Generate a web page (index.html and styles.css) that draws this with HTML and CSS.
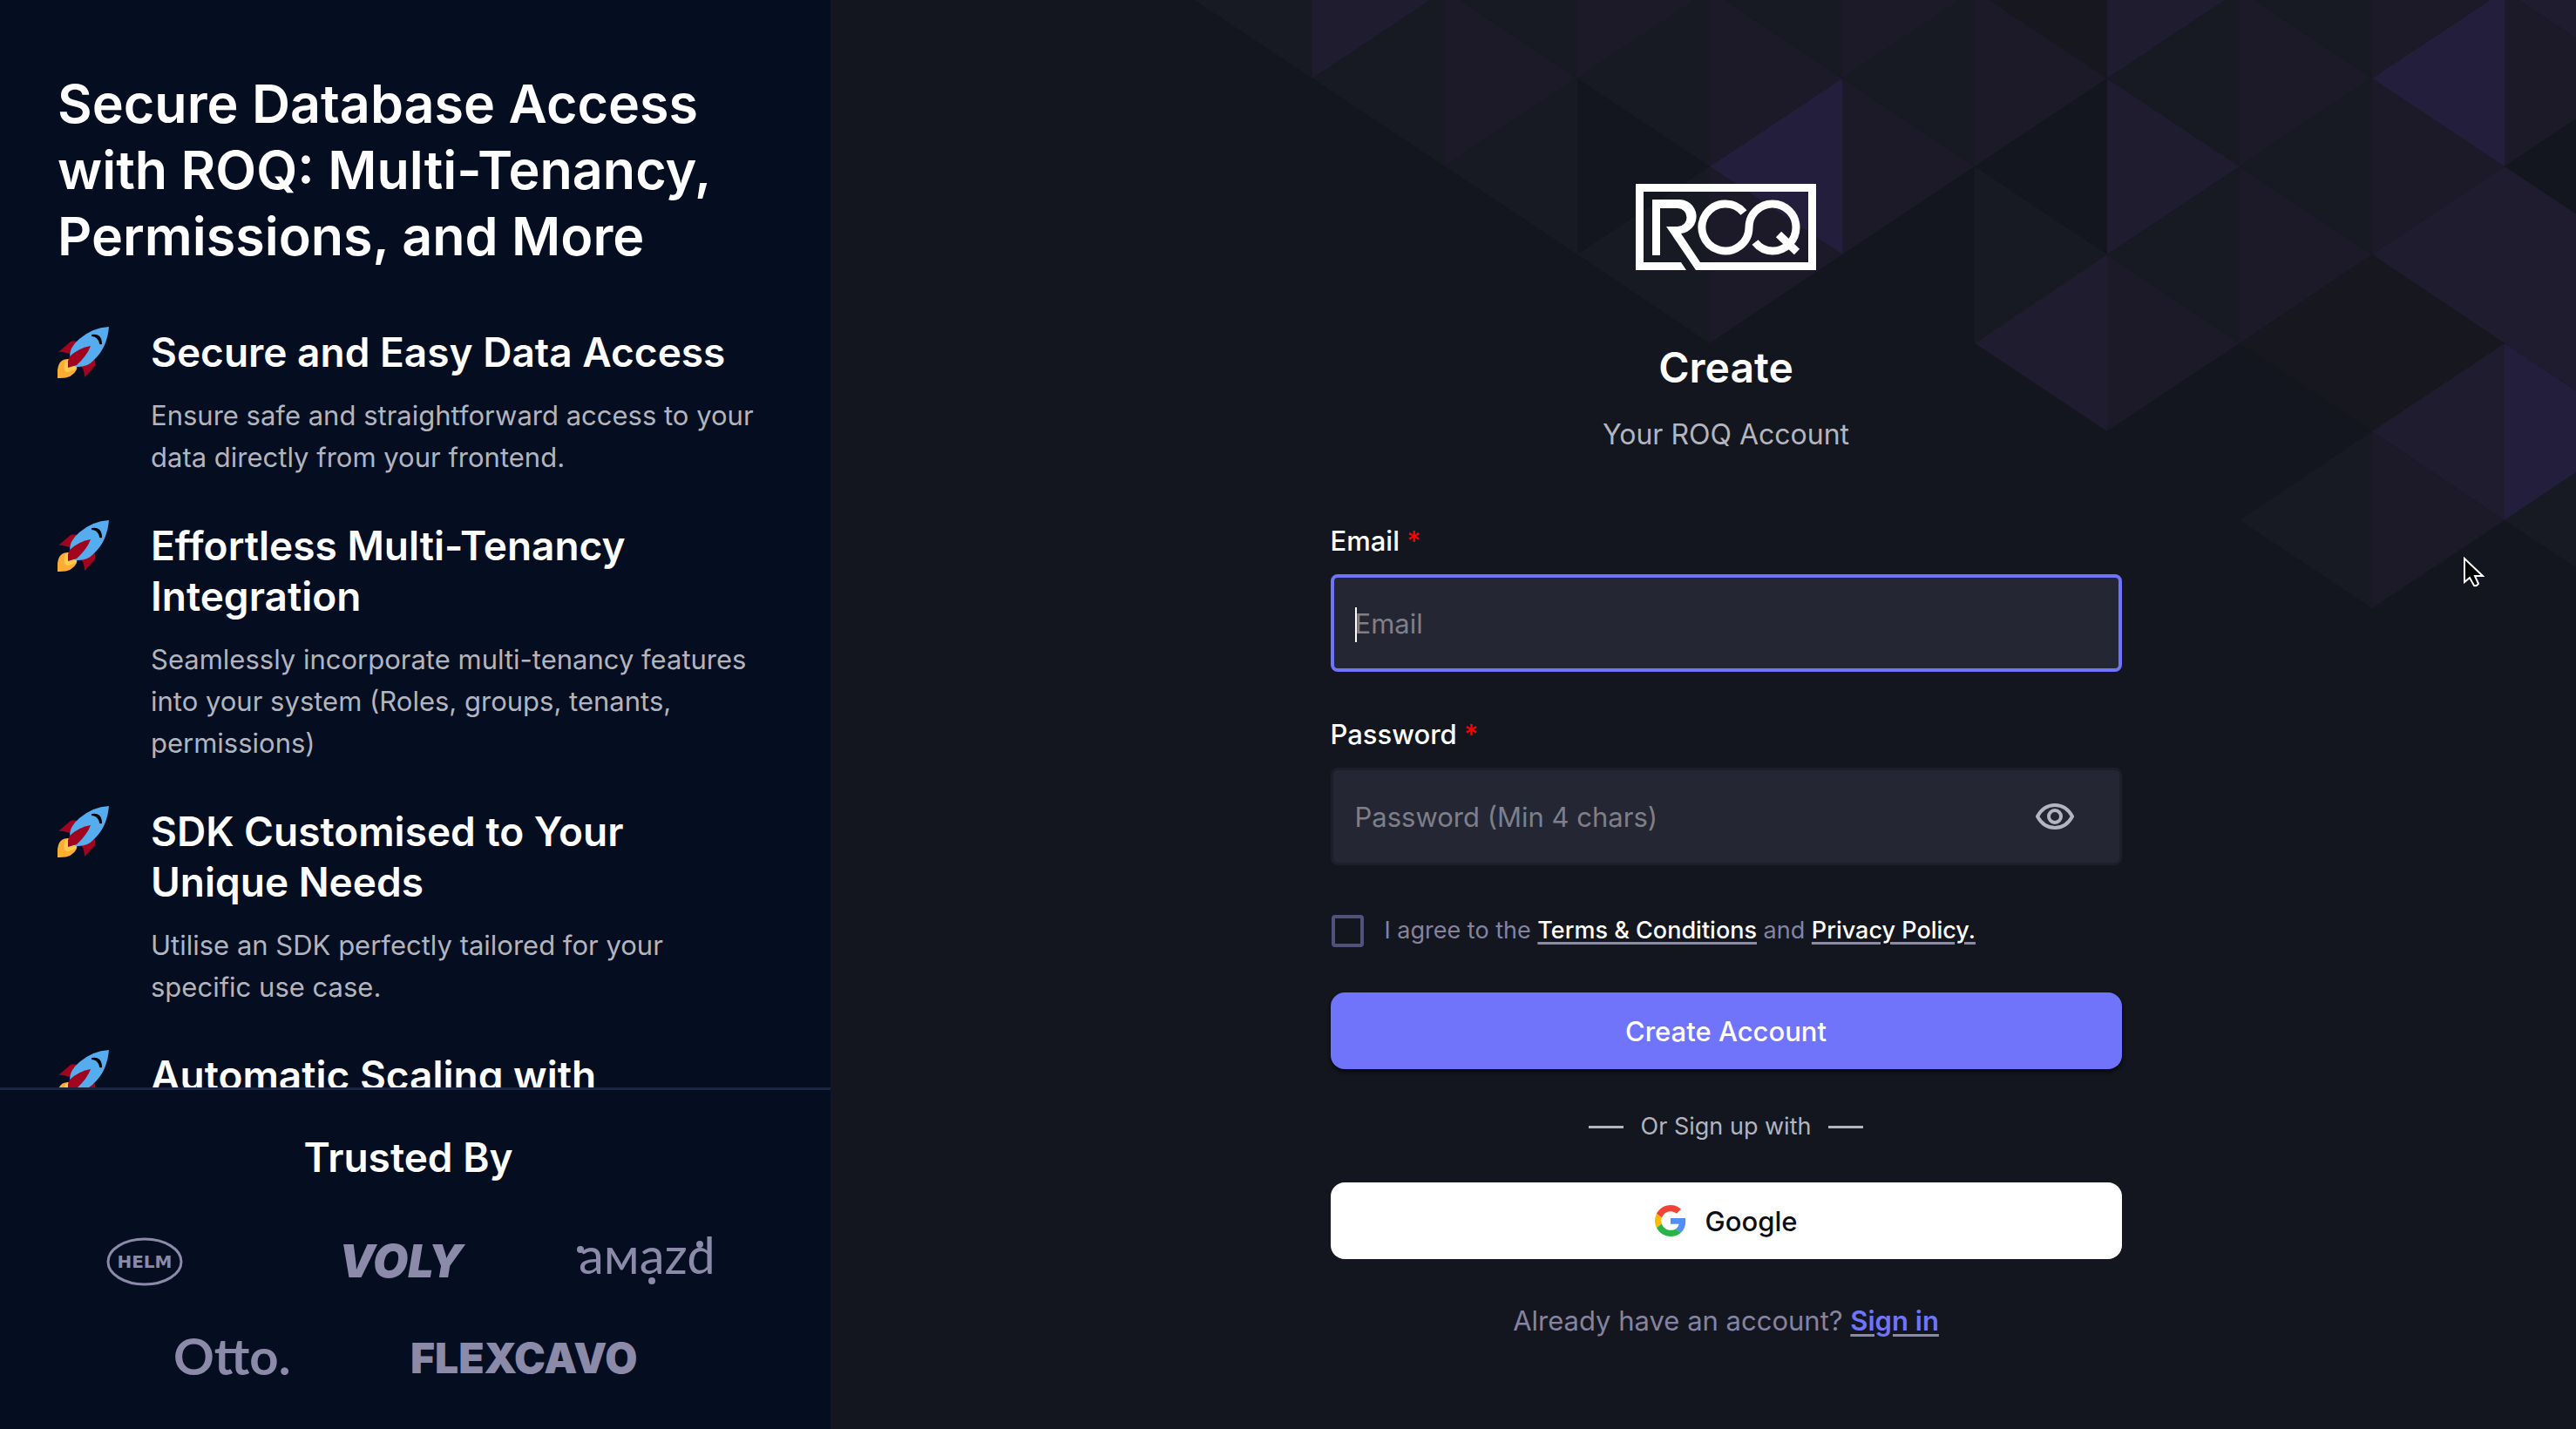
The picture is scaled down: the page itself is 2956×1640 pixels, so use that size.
FILE: index.html
```html
<!DOCTYPE html>
<html lang="en">
<head>
<meta charset="utf-8">
<meta name="viewport" content="width=device-width, initial-scale=1">
<title>Create your ROQ account</title>
<link rel="stylesheet" href="styles.css">
</head>
<body>
<svg class="defs" width="0" height="0" aria-hidden="true">
  <symbol id="rocket" viewBox="0 0 60 60">
    <path d="M1 29 15 17Q20 15 25 18L13 31Q6 28 1 29Z" fill="#a0041e"/>
    <path d="M43 38V45L31 58Q31 50 27 45L30 42Z" fill="#a0041e"/>
    <path d="M0 59Q-2 37 12 37Q24 40 22 49Q17 60 0 59Z" fill="#ffac33"/>
    <path d="M8 42Q6 52 12 52Q21 50 22 46L13 37Q9 38 8 42Z" fill="#ffcc4d"/>
    <path d="M59 0Q40 1 25 14Q13 24 14 36Q13 43 21 46Q34 47 42 38Q57 24 59 0Z" fill="#55acee"/>
    <path d="M12 39 14 34Q25 24 38 22Q34 33 22 44L12 47Z" fill="#a0041e"/>
    <path d="M39 9Q51 7 51 20Q48 21 48 19Q46 11 39 11Z" fill="#000"/>
  </symbol>
</svg>
<div class="page">
  <aside class="promo">
    <div class="promo-scroll">
      <h1 class="promo-title">Secure Database Access with ROQ: Multi-Tenancy, Permissions, and More</h1>
      <ul class="features">
        <li class="feature">
          <svg class="rocket" aria-hidden="true"><use href="#rocket"/></svg>
          <div class="feature-body">
            <h2 class="feature-title">Secure and Easy Data Access</h2>
            <p class="feature-text">Ensure safe and straightforward access to your data directly from your frontend.</p>
          </div>
        </li>
        <li class="feature">
          <svg class="rocket" aria-hidden="true"><use href="#rocket"/></svg>
          <div class="feature-body">
            <h2 class="feature-title">Effortless Multi-Tenancy Integration</h2>
            <p class="feature-text">Seamlessly incorporate multi-tenancy features into your system (Roles, groups, tenants, permissions)</p>
          </div>
        </li>
        <li class="feature">
          <svg class="rocket" aria-hidden="true"><use href="#rocket"/></svg>
          <div class="feature-body">
            <h2 class="feature-title">SDK Customised to Your Unique Needs</h2>
            <p class="feature-text">Utilise an SDK perfectly tailored for your specific use case.</p>
          </div>
        </li>
        <li class="feature">
          <svg class="rocket" aria-hidden="true"><use href="#rocket"/></svg>
          <div class="feature-body">
            <h2 class="feature-title">Automatic Scaling with</h2>
          </div>
        </li>
      </ul>
    </div>
    <section class="trusted">
      <h2 class="trusted-title">Trusted By</h2>
      <div class="brands">
        <svg class="brand" width="90" height="58" viewBox="0 0 90 58"><ellipse cx="45" cy="29" rx="42" ry="26" class="brand-ring"/><text x="45" y="36" class="brand-helm">HELM</text></svg>
        <svg class="brand" width="140" height="58" viewBox="0 0 140 58"><text x="-3" y="47" class="brand-voly">VOLY</text></svg>
        <svg class="brand" width="158" height="58" viewBox="0 0 158 58"><text x="2" y="43" class="brand-amazd">aᴍazd</text><circle cx="4" cy="15" r="4"/><circle cx="86" cy="51" r="4"/><circle cx="141" cy="9" r="4"/></svg>
      </div>
      <div class="brands-second">
        <svg class="brand" width="134" height="46" viewBox="0 0 134 46"><text x="-2" y="41" class="brand-otto">Otto.</text></svg>
        <svg class="brand" width="264" height="46" viewBox="0 0 264 46"><text x="-2" y="39" class="brand-flex">FLEXCAVO</text></svg>
      </div>
    </section>
  </aside>

  <main class="signup">
    <svg class="pattern" width="1602" height="700" viewBox="1354 0 1602 700" aria-hidden="true">
      <g fill="#171923">
        <path d="M1354-11 1506-112V90ZM1506 90 1658-11V191ZM1658-11 1810-112V90ZM1658 191 1810 90V292ZM1810 90 1962-11V191ZM1810 292 1962 191V394ZM1962-11 2114-112V90ZM2114 90 2266-11V191ZM2266 191 2418 292 2266 394ZM2418 90 2570-11V191ZM2418 292 2570 191V394ZM2570-11 2722-112V90ZM2570 191 2722 90V292ZM2570 597 2722 495V698ZM2874 597 3026 495V698Z"/>
      </g>
      <g fill="#16171f"><path d="M2266-11 2418-112V90ZM2722 292 2874 394 2722 495ZM2570 394 2722 292V495Z"/></g>
      <g fill="#1c1a28">
        <path d="M1658-11 1810 90 1658 191ZM1810-112 1962-11 1810 90ZM1962-11 2114 90 1962 191ZM1962 191 2114 292 1962 394ZM2114-112 2266-11 2114 90ZM2114 90 2266 191 2114 292ZM2266-11 2418 90 2266 191ZM2418 292 2570 394 2418 495ZM2570-11 2722 90 2570 191ZM2570 191 2722 292 2570 394ZM2722-112 2874-11 2722 90ZM2722 90 2874 191 2722 292ZM2722 495 2874 597 2722 698ZM2874-11 3026 90 2874 191Z"/>
      </g>
      <g fill="#1f1c30">
        <path d="M1506-112 1658-11 1506 90ZM2266 394 2418 292V495ZM2418-112 2570-11 2418 90ZM2418 90 2570 191 2418 292ZM2722 292 2874 191V394ZM2722 495 2874 394V597ZM2874-11 3026-112V90ZM2874 191 3026 292 2874 394ZM2874 394 3026 292V495Z"/>
      </g>
      <g fill="#231e3b"><path d="M1962 191 2114 90V292ZM2722 90 2874-11V191ZM2874 394 3026 495 2874 597Z"/></g>
    </svg>

    <form class="form" onsubmit="return false">
      <svg class="logo" width="208" height="100" viewBox="0 0 208 100" role="img" aria-label="ROQ">
        <path d="M0 0H207V99H69L35 49H48A10.500 10.500 0 0 0 48 28H28V82H19V18H48A19.500 19.500 0 0 1 52 57L74 90H198V9H9V90H52L58 99H0Z" fill="#fff"/>
        <path d="M124 33A27 27 0 1 0 130 50A27 27 0 1 1 157 77Q145 77 137 67" fill="none" stroke="#fff" stroke-width="9"/>
        <path d="M164 58 185 78" stroke="#fff" stroke-width="9"/>
      </svg>
      <h2 class="form-title">Create</h2>
      <p class="form-sub">Your ROQ Account</p>

      <label class="label" for="email">Email <span class="req">*</span></label>
      <div class="field field-active">
        <input class="input" id="email" type="email" placeholder="Email">
        <span class="caret"></span>
      </div>

      <label class="label" for="password">Password <span class="req">*</span></label>
      <div class="field">
        <input class="input" id="password" type="password" placeholder="Password (Min 4 chars)">
        <button class="eye" type="button" aria-label="Show password">
          <svg width="44" height="30" viewBox="0 0 44 30" fill="none" stroke="#b4b4c2" stroke-width="4"><path d="M2 15Q9 2 22 2T42 15Q35 28 22 28T2 15Z"/><circle cx="22" cy="15" r="7"/></svg>
        </button>
      </div>

      <div class="agree">
        <input class="check" id="agree" type="checkbox">
        <label for="agree">I agree to the <a class="doc" href="#terms">Terms &amp; Conditions</a> and <a class="doc" href="#privacy">Privacy Policy.</a></label>
      </div>

      <button class="btn btn-primary" type="submit">Create Account</button>
      <div class="divider"><span>Or Sign up with</span></div>
      <button class="btn btn-google" type="button">
        <svg width="36" height="36" viewBox="0 0 48 48" aria-hidden="true">
          <path fill="#f44336" d="M24 9.500c3.540 0 6.710 1.220 9.210 3.600l6.850-6.850C35.900 2.380 30.470 0 24 0 14.620 0 6.510 5.380 2.560 13.220l7.980 6.190C12.430 13.720 17.740 9.500 24 9.500z"/>
          <path fill="#518ef8" d="M46.980 24.550c0-1.570-.15-3.090-.38-4.550H24v9.020h12.940c-.58 2.960-2.260 5.480-4.780 7.180l7.730 6c4.510-4.180 7.090-10.360 7.090-17.650z"/>
          <path fill="#fbbb00" d="M10.530 28.590c-.48-1.450-.76-2.990-.76-4.590s.27-3.140.76-4.590l-7.980-6.190C.92 16.460 0 20.120 0 24c0 3.880.92 7.540 2.560 10.780l7.970-6.190z"/>
          <path fill="#28b446" d="M24 48c6.480 0 11.930-2.130 15.890-5.810l-7.730-6c-2.150 1.450-4.920 2.300-8.160 2.300-6.260 0-11.570-4.220-13.470-9.910l-7.980 6.190C6.510 42.620 14.620 48 24 48z"/>
        </svg>
        Google
      </button>
      <p class="signin">Already have an account? <a class="signin-link" href="#signin">Sign in</a></p>
    </form>
  </main>
</div>
<svg class="cursor" width="24" height="36" viewBox="0 0 24 36" aria-hidden="true"><path d="M1 2V29L7 24L12 33Q15 34 17 31L13 22H22Z" fill="#000" stroke="#fff" stroke-width="2"/></svg>
</body>
</html>
```
FILE: styles.css
```css
* { box-sizing: border-box; }

body {
  margin: 0;
  background: #13161e;
  color: #fff;
  font-family: Inter, "Liberation Sans", sans-serif;
  font-weight: 400;
}

h1, h2, p, ul { margin: 0; padding: 0; }
h1, h2 { font-weight: 600; }
ul { list-style: none; }
input, button { font: inherit; }
.defs { position: absolute; }

.page { display: flex; height: 100vh; overflow: hidden; }

/* Left panel */
.promo {
  flex: 0 0 953px;
  display: flex;
  flex-direction: column;
  background: #050d21;
}
.promo-scroll { flex: 1; min-height: 0; overflow: hidden; padding: 81px 80px 0 66px; }
.promo-title { font-size: 61px; line-height: 76px; }
.features { display: flex; flex-direction: column; gap: 48px; margin-top: 66px; }
.feature { display: flex; gap: 47px; }
.rocket { flex: none; width: 60px; height: 60px; }
.feature-title { font-size: 46px; line-height: 58px; }
.feature-text { margin-top: 20px; color: #b2b4be; font-size: 31px; line-height: 48px; }

.trusted { flex: 0 0 392px; border-top: 3px solid #1b2640; }
.trusted-title { margin: 48px 16px 0 0; font-size: 46px; line-height: 58px; text-align: center; }
.brands { display: grid; grid-template-columns: 271px 270px auto; padding-left: 121px; margin-top: 62px; }
.brands-second { display: flex; gap: 138px; padding-left: 201px; margin-top: 60px; }
.brand { fill: #8b8aa8; overflow: visible; }
.brand-ring { fill: none; stroke: #8b8aa8; stroke-width: 3px; }
.brand-helm { font: 700 20px "DejaVu Sans", sans-serif; text-anchor: middle; }
.brand-voly { font: italic 900 52px Inter, sans-serif; }
.brand-amazd { font: 400 58px Lato, sans-serif; }
.brand-otto { font: 700 58px Lato, sans-serif; }
.brand-flex { font: 900 48px Inter, sans-serif; }

/* Right panel */
.signup { position: relative; flex: 1; display: flex; justify-content: center; }
.pattern { position: absolute; top: 0; right: 0; }
.form { position: relative; width: 908px; margin-left: 52px; padding-top: 211px; display: flex; flex-direction: column; }
.logo { align-self: center; }
.form-title { margin-top: 81px; font-size: 48px; line-height: 60px; text-align: center; }
.form-sub { margin-top: 23px; color: #b4b5be; font-size: 32px; line-height: 48px; text-align: center; }
.label { margin-top: 76px; font-size: 31px; line-height: 44px; font-weight: 500; }
.field + .label { margin-top: 50px; }
.req { color: #f00; }
.field {
  position: relative;
  display: flex;
  align-items: center;
  height: 112px;
  margin-top: 16px;
  padding: 0 52px 0 25px;
  background: #242633;
  border: 3px solid #1c1e29;
  border-radius: 8px;
}
.field-active { padding-left: 24px; border: 4px solid #6f74fa; }
.input { flex: 1; min-width: 0; padding: 2px 0 0; border: 0; outline: 0; background: none; color: #fff; font-size: 31px; line-height: 44px; }
.input::placeholder { color: #7f7f89; opacity: 1; }
.caret { position: absolute; left: 24px; top: 34px; width: 2px; height: 40px; background: #fff; }
.eye { display: flex; padding: 0; border: 0; background: none; }

.agree { display: flex; align-items: center; gap: 24px; margin-top: 53px; color: #8583a0; font-size: 27px; line-height: 44px; }
.check { appearance: none; width: 37px; height: 37px; margin: 0 0 0 1px; border: 4px solid #50527a; border-radius: 4px; }
.doc { color: #fff; font-weight: 500; text-decoration: underline #8b8aa8 3px; text-underline-offset: 4px; }

.btn { display: flex; align-items: center; justify-content: center; gap: 22px; height: 88px; padding: 0; border: 0; border-radius: 16px; font-size: 31px; font-weight: 500; }
.btn-primary { margin-top: 49px; background: #6f74fa; color: #fff; box-shadow: 0 3px 4px #07080c; }
.btn-google { background: #fff; color: #0c0e14; }
.divider { display: flex; align-items: center; justify-content: center; gap: 20px; margin: 44px 0 42px; color: #b2b4be; font-size: 27px; line-height: 44px; }
.divider::before, .divider::after { content: ""; width: 40px; height: 3px; background: #b2b4be; }
.signin { margin-top: 47px; color: #8583a0; font-size: 31px; line-height: 48px; text-align: center; }
.signin-link { color: #6f74fa; font-weight: 600; text-decoration: underline #8b8aa8 3px; text-underline-offset: 4px; }

.cursor { position: absolute; left: 2827px; top: 639px; }
```
